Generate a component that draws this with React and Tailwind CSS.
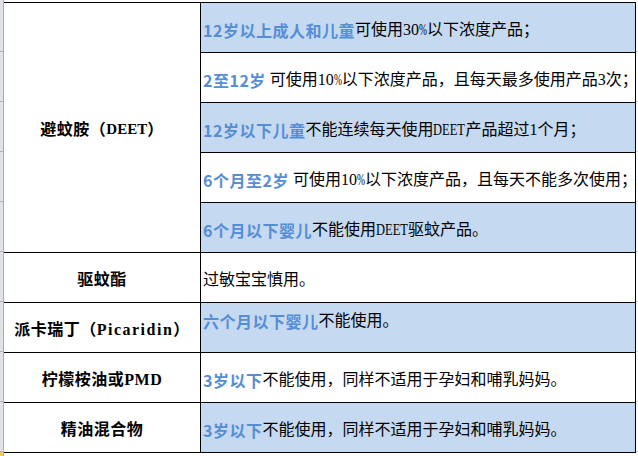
import React from 'react';

const serif = { fontFamily: '"Liberation Serif", "Noto Sans CJK SC", serif' };
const sans = { fontFamily: '"Noto Sans CJK SC", sans-serif' };

function Pct() {
  return (
    <span className="inline-block w-[8px] whitespace-nowrap">
      <span className="inline-block origin-left scale-x-[0.6]">%</span>
    </span>
  );
}

function Deet() {
  return (
    <span className="inline-block w-[32px] whitespace-nowrap">
      <span className="inline-block origin-left scale-x-[0.78]">DEET</span>
    </span>
  );
}

const rows = [
  { blue: true, hl: '12岁以上成人和儿童', rest: <>可使用30<Pct />以下浓度产品；</> },
  { blue: false, hl: '2至12岁', rest: <> 可使用10<Pct />以下浓度产品，且每天最多使用产品3次；</> },
  { blue: true, hl: '12岁以下儿童', rest: <>不能连续每天使用<Deet />产品超过1个月；</> },
  { blue: false, hl: '6个月至2岁', rest: <> 可使用10<Pct />以下浓度产品，且每天不能多次使用；</> },
  { blue: true, hl: '6个月以下婴儿', rest: <>不能使用<Deet />驱蚊产品。</> },
];

const others = [
  { label: '驱蚊酯', blue: false, hl: '', rest: '过敏宝宝慎用。' },
  {
    label: <>派卡瑞丁（<span className="tracking-[1.5px]">Picaridin</span>）</>,
    blue: true,
    hl: '六个月以下婴儿',
    rest: '不能使用。',
    top: true,
  },
  { label: '柠檬桉油或PMD', blue: false, hl: '3岁以下', rest: '不能使用，同样不适用于孕妇和哺乳妈妈。' },
  { label: '精油混合物', blue: true, hl: '3岁以下', rest: '不能使用，同样不适用于孕妇和哺乳妈妈。' },
];

function Cell({ r }) {
  return (
    <div
      className={`border-b border-black pl-[2px] flex whitespace-pre ${r.top ? 'items-start pt-[6px]' : 'items-center pt-[4px]'} ${r.blue ? 'bg-[#c5d9f1]' : 'bg-white'}`}
    >
      {r.hl && (
        <span className="text-[16px] font-bold tracking-[0.5px] text-[#558ed5]" style={sans}>
          {r.hl}
        </span>
      )}
      <span className="text-[16px] text-black" style={serif}>{r.rest}</span>
    </div>
  );
}

function Label({ text, span }) {
  return (
    <div
      className={`border-b border-r border-black flex items-center justify-center pt-[4px] text-[16px] font-bold tracking-[0.5px] text-black whitespace-nowrap ${span ? 'row-span-5' : ''}`}
      style={serif}
    >
      {text}
    </div>
  );
}

export default function App() {
  const ticks = Array.from({ length: 9 });
  return (
    <div className="flex w-[638px] h-[456px] bg-white overflow-hidden">
      <div className="w-[4px] h-full bg-[#dfe3e8] border-r border-[#a9b0b9] flex flex-col pt-[2px]">
        {ticks.map((_, i) => (
          <div key={i} className="h-[50px] shrink-0 border-b border-[#a9b0b9]" />
        ))}
        <div className="flex-1 bg-[#f5c65c]" />
      </div>
      <div className="w-[632px] mt-[2px] self-start border-t border-r border-black grid grid-cols-[197px_434px] grid-rows-[repeat(9,50px)]">
        <Label
          text={
            <>
              避蚊胺（<span className="text-[15px] tracking-normal">DEET</span>）
            </>
          }
          span
        />
        {rows.map((r, i) => (
          <Cell key={i} r={r} />
        ))}
        {others.map((o, i) => (
          <React.Fragment key={i}>
            <Label text={o.label} />
            <Cell r={o} />
          </React.Fragment>
        ))}
      </div>
      <div className="w-[2px] flex flex-col pt-[2px]">
        {ticks.map((_, i) => (
          <div key={i} className="h-[50px] shrink-0 border-b border-[#d4d8de]" />
        ))}
      </div>
    </div>
  );
}
